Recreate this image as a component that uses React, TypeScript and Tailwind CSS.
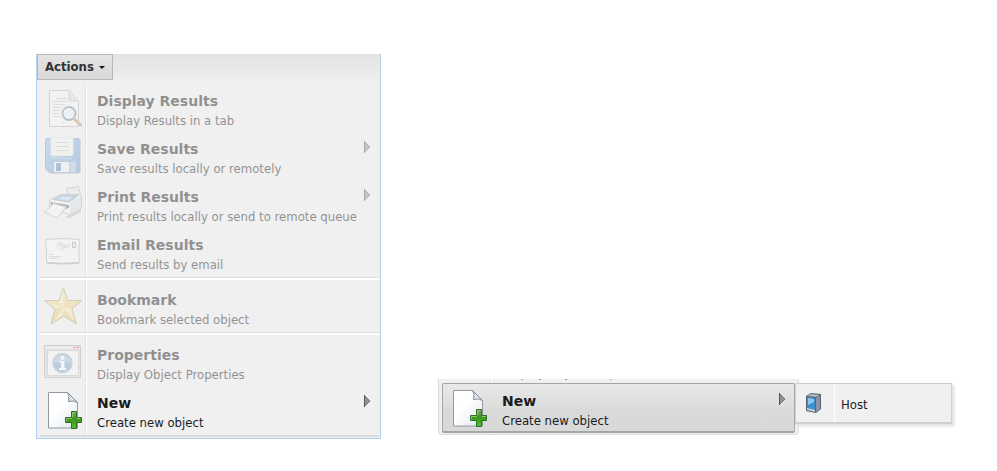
import type { ReactNode } from 'react';

function DisplayIcon() {
  return (
    <svg width="38" height="38" viewBox="0 0 38 38" aria-hidden="true">
      <path d="M5.500 1.500H25L34.500 12V37.500H5.500Z" fill="#f6f6f4" stroke="#b4b4b4" />
      <path d="M25 1.500V12H34.500" fill="#dedede" stroke="#b9b9b9" />
      <path d="M13 9.500H23M9 12.500H23M9 15.500H21M9 18.500H18M9 21.500H16M9 24.500H15M9 27.500H17M18 33.500H21" stroke="#c6c6c6" />
      <circle cx="25" cy="24.500" r="6.500" fill="#e9f2fa" fillOpacity=".95" stroke="#77889a" strokeWidth="1.800" />
      <path d="M21 23Q22 20 26 20" stroke="#fff" strokeWidth="2" fill="none" />
      <path d="M31 30.500L36.500 36" stroke="#b98d62" strokeWidth="3" strokeLinecap="round" />
      <path d="M31 30L36 35" stroke="#e3c39b" />
    </svg>
  );
}

function SaveIcon() {
  return (
    <svg width="38" height="38" viewBox="0 0 38 38" aria-hidden="true">
      <defs>
        <linearGradient id="disk" x1="0" y1="0" x2="1" y2="1">
          <stop offset="0" stopColor="#9cc0e4" />
          <stop offset="1" stopColor="#6c9bd0" />
        </linearGradient>
      </defs>
      <path d="M3 1.500H34Q36 1.500 36 3.500V34Q36 36 34 36H6L1.500 32V3.500Q1.500 1.500 3 1.500Z" fill="url(#disk)" stroke="#7f9fc2" />
      <path d="M7 1H29V17Q29 18.500 27 18.500H9Q7 18.500 7 17Z" fill="#f3f3f0" stroke="#dfe3e6" />
      <path d="M12 5.500H25M12 9.500H25M12 13.500H25" stroke="#c8c8c4" />
      <path d="M9.500 24.500H26V35.500H9.500Z" fill="#eceff2" stroke="#90a3b8" />
      <path d="M26 24.500H32V35.500H26Z" fill="#a9c4e2" stroke="#90abc9" />
      <path d="M12 26H17V34H12Z" fill="#5989c4" />
      <path d="M7 20L28 22" stroke="#b7d2ee" />
    </svg>
  );
}

function PrintIcon() {
  return (
    <svg width="38" height="38" viewBox="0 0 38 38" aria-hidden="true">
      <path d="M21 32L37 24V27L26 33Z" fill="#bcbcbc" />
      <path d="M22.500 3.500L34 1.500L36.500 9L25 10Z" fill="#f2f3f4" stroke="#a9adb2" />
      <path d="M25 4.500L33 3M26 6.500L34 5" stroke="#d5d8da" />
      <path d="M5.500 15L17 9.500L35 9Q37.500 10 37.500 13V23L26 30L6 22Z" fill="#f3f4f5" stroke="#a9afb6" />
      <path d="M9 14.500L17 10.500L34 10.500L25 17Z" fill="#8fbadf" stroke="#8da5ba" />
      <path d="M14 14L19 11.500L29 12L24 15Z" fill="#c9e0f2" />
      <path d="M26 18L37 11V23L26 30Z" fill="#dcdee0" />
      <path d="M6 17L25 20V23L21 24L8 21Z" fill="#68717a" />
      <path d="M9.500 18.500L22 22L13 33L.500 27Z" fill="#fbfbfb" stroke="#adadad" />
      <path d="M9 20L4 26M13 22L9 28" stroke="#e2e2e2" />
    </svg>
  );
}

function EmailIcon() {
  return (
    <svg width="38" height="38" viewBox="0 0 38 38" aria-hidden="true">
      <path d="M1.500 6.500Q19 4.500 35.500 6.500Q34.500 18 35.500 29.500Q19 31 2.500 29.500Q3 18 1.500 6.500Z" fill="#f7f7f6" stroke="#b4b4b4" />
      <path d="M3 30Q19 31.500 35 30" fill="none" stroke="#a9a9a9" strokeWidth="1.500" />
      <path d="M28.500 9.500H31.500V14.500H28.500Z" fill="#ededea" stroke="#9f9e92" />
      <path d="M14 12Q16 10 18 12T26 11M16 14Q18 12 20 14T26 13" fill="none" stroke="#c3c3c3" />
      <circle cx="17" cy="13" r="3.500" fill="none" stroke="#cfcfcf" />
      <path d="M5 21.500H9M5 23.500H17M5 25.500H15" stroke="#c2c2c2" />
    </svg>
  );
}

function StarIcon() {
  return (
    <svg width="38" height="38" viewBox="0 0 38 38" aria-hidden="true">
      <defs>
        <linearGradient id="gold" x1="0" y1="0" x2="0" y2="1">
          <stop offset="0" stopColor="#f8e6a4" />
          <stop offset="1" stopColor="#e6c273" />
        </linearGradient>
      </defs>
      <path d="M19.500 .500L24 12.500H37.500L28 21L32.500 36L19.500 28L7 36L11 21L.500 12.500H15Z" fill="url(#gold)" stroke="#b5a071" strokeLinejoin="round" />
      <path d="M19.500 3V20L15 14ZM19.500 20L3 13.500L12 20ZM19.500 20L31 34L27 21ZM19.500 20L9 34L19 27Z" fill="#fff5cc" fillOpacity=".7" />
    </svg>
  );
}

function PropertiesIcon() {
  return (
    <svg width="38" height="38" viewBox="0 0 38 38" aria-hidden="true">
      <path d="M.500 2.500H36.500V34.500H.500Z" fill="#d5dade" stroke="#a6abb0" />
      <path d="M1 3H36V6H1Z" fill="#e5e8ea" />
      <path d="M29 4.500H31M32 4.500H35" stroke="#d8645d" strokeWidth="1.500" />
      <path d="M3.500 7.500H34.500V32.500H3.500Z" fill="#f6f6f6" stroke="#bcc1c5" />
      <circle cx="18.500" cy="20" r="9.500" fill="#7ba3cb" stroke="#a2afbd" strokeWidth="1.500" />
      <path d="M10 20Q11 12 18.500 12T27 20Q18 17 10 20Z" fill="#a4c1dd" />
      <circle cx="18.500" cy="15" r="2" fill="#fff" />
      <path d="M15.500 18H20.500V25H22V27H15V25H17V20H15.500Z" fill="#fff" />
    </svg>
  );
}

function NewIcon() {
  return (
    <svg width="38" height="38" viewBox="0 0 38 38" aria-hidden="true">
      <defs>
        <linearGradient id="paper" x1="0" y1="0" x2="1" y2="1">
          <stop offset=".4" stopColor="#fff" />
          <stop offset="1" stopColor="#e2e6ec" />
        </linearGradient>
        <linearGradient id="plus" x1="0" y1="0" x2="0" y2="1">
          <stop offset="0" stopColor="#7fae6c" />
          <stop offset=".45" stopColor="#38951c" />
          <stop offset="1" stopColor="#4cc626" />
        </linearGradient>
      </defs>
      <path d="M4.500 1.500H23.500L33.500 11.500V37H4.500Z" fill="url(#paper)" stroke="#9299a3" />
      <path d="M23.500 1.500Q26 5 24.500 10.500Q30 9 33.500 11.500Z" fill="#dfe4ea" stroke="#858e99" />
      <path d="M27.500 20.500H32.500V26.500H37.500V31.500H32.500V37.500H27.500V31.500H21.500V26.500H27.500Z" fill="url(#plus)" stroke="#2f6e20" />
      <path d="M28.500 26V21.500H31.500M22.500 30.500V27.500H28M33 27.500H36.500" stroke="#8fc47d" fill="none" />
    </svg>
  );
}

function HostIcon() {
  return (
    <svg width="16" height="20" viewBox="0 0 16 20" aria-hidden="true">
      <path d="M0 3L5 0L15 1V16L10 20L0 18Z" fill="#566374" />
      <path d="M1 3L5 1L14 2L10 4Z" fill="#b1bac5" />
      <path d="M1 4L9 5V18L1 16Z" fill="#3f91cc" />
      <path d="M2 5L8 6V9L2 12Z" fill="#8ac8ed" />
      <path d="M10 5L14 3V16L10 19Z" fill="#8794a6" />
      <path d="M1 15L9 17V19L1 17Z" fill="#c5ced6" />
    </svg>
  );
}

function Arrow() {
  return (
    <svg className="mt-2 shrink-0" width="7" height="12" viewBox="0 0 7 12" aria-hidden="true">
      <path d="M.500 .500V11.500L6 6Z" fill="#929292" stroke="#777" />
      <path d="M.500 0V12" stroke="#555" />
    </svg>
  );
}

type ItemProps = { title: string; detail: string; icon: ReactNode; arrow?: boolean; disabled?: boolean };

function MenuItem({ title, detail, icon, arrow, disabled }: ItemProps) {
  return (
    <button
      type="button"
      role="menuitem"
      disabled={disabled}
      className="flex h-12 w-full items-start pr-2 pl-1 text-left text-[#1c1c1c] disabled:opacity-45"
    >
      <span className="mt-1 shrink-0">{icon}</span>
      <span className="ml-[15px] flex-1 pt-[6px] whitespace-nowrap">
        <span className="block font-['DejaVu_Sans',sans-serif] text-[14px] leading-5 font-bold">{title}</span>
        <span className="block text-[13px] leading-5">{detail}</span>
      </span>
      {arrow && <Arrow />}
    </button>
  );
}

function Separator() {
  return <div role="separator" className="mb-1 h-[3px] border-t border-[#dedede] bg-white" />;
}

export default function App() {
  return (
    <main className="flex items-end bg-white pt-[54px] pr-10 pl-9 font-['DejaVu_Sans_Condensed','DejaVu_Sans',sans-serif]">
      <section className="w-[345px] shrink-0 border border-t-0 border-[#b1cff0] bg-[#f0f0f0]">
        <div className="h-[31px] bg-linear-to-b from-[#e3e3e3] to-[#f0f0f0]">
          <button
            type="button"
            aria-haspopup="menu"
            aria-expanded="true"
            className="flex h-[26px] items-center gap-[5px] border border-[#b8b8b8] bg-linear-to-b from-[#e4e4e4] to-[#d8d8d8] px-[7px] text-[13px] leading-5 font-bold whitespace-nowrap text-[#333]"
          >
            Actions
            <svg width="6" height="3" viewBox="0 0 6 3" aria-hidden="true">
              <path d="M0 0H6L3 3Z" fill="#111" />
            </svg>
          </button>
        </div>
        <div
          role="menu"
          className="mr-px mb-px ml-[3px] border-b-2 border-[#dcdcdc] bg-[linear-gradient(to_right,transparent_45px,#e2e2e2_45px,#e2e2e2_46px,#fff_46px,#fff_47px,transparent_47px)]"
        >
          <MenuItem title="Display Results" detail="Display Results in a tab" icon={<DisplayIcon />} disabled />
          <MenuItem title="Save Results" detail="Save results locally or remotely" icon={<SaveIcon />} arrow disabled />
          <MenuItem title="Print Results" detail="Print results locally or send to remote queue" icon={<PrintIcon />} arrow disabled />
          <MenuItem title="Email Results" detail="Send results by email" icon={<EmailIcon />} disabled />
          <Separator />
          <MenuItem title="Bookmark" detail="Bookmark selected object" icon={<StarIcon />} disabled />
          <Separator />
          <MenuItem title="Properties" detail="Display Object Properties" icon={<PropertiesIcon />} disabled />
          <MenuItem title="New" detail="Create new object" icon={<NewIcon />} arrow />
        </div>
      </section>

      <section className="mb-1 ml-[57px] flex h-14 items-start">
        <div
          role="menu"
          className="w-[361px] rounded-b border-x border-b border-[#dcdcdc] bg-[#f0f0f0] bg-[linear-gradient(to_right,transparent_51px,#e2e2e2_51px,#e2e2e2_52px,#fff_52px,#fff_53px,transparent_53px)] px-[3px] pb-px"
        >
          <div className="flex h-1 items-end overflow-hidden pl-[60px] text-[13px] leading-5 text-[#8b8b8b]">
            <span>Display Object Properties</span>
          </div>
          <div className="h-[50px] rounded-xs border border-b-2 border-[#a5a5a5] bg-linear-to-b from-[#e9e9e9] to-[#d9d9d9] to-60% pt-px pl-[2px]">
            <MenuItem title="New" detail="Create new object" icon={<NewIcon />} arrow />
          </div>
        </div>
        <div role="menu" className="z-10 mt-1 -ml-1 h-[41px] w-[157px] border border-b-2 border-[#cfcfcf] bg-[#f0f0f0] shadow-[2px_2px_3px_#ddd]">
          <button type="button" role="menuitem" className="flex h-full w-full items-center pl-[10px] text-[13px] text-[#1c1c1c]">
            <HostIcon />
            <span className="ml-3 h-full border-l border-white" />
            <span className="ml-[6px] pt-1">Host</span>
          </button>
        </div>
      </section>
    </main>
  );
}
